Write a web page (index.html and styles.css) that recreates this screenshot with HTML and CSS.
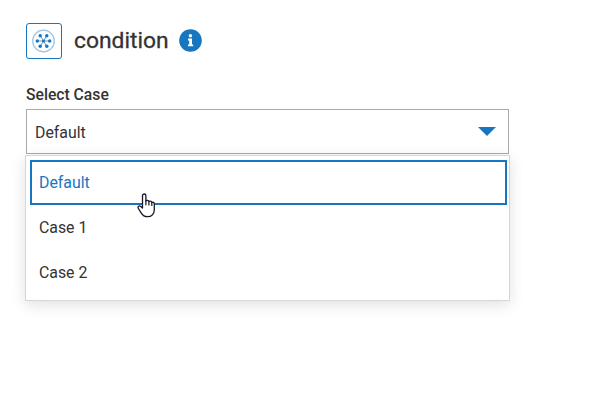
FILE: index.html
```html
<!DOCTYPE html>
<html lang="en">
<head>
    <meta charset="UTF-8">
    <meta name="viewport" content="width=device-width, initial-scale=1.0">
    <title>condition</title>
    <link rel="stylesheet" href="styles.css">
</head>
<body>
    <div class="panel">
        <div class="header">
            <div class="node-icon">
                <svg width="24" height="24" viewBox="0 0 24 24">
                    <circle class="ring" cx="11.5" cy="12" r="10.8"/>
                    <path class="spokes" d="M5 12h13M8.2 6.4l6.6 11.2M14.8 6.4L8.2 17.6"/>
                    <g class="dots">
                        <circle cx="11.5" cy="12" r="1.5"/>
                        <circle cx="5.3" cy="12" r="1.7"/>
                        <circle cx="17.7" cy="12" r="1.7"/>
                        <circle cx="8.2" cy="6.8" r="1.7"/>
                        <circle cx="14.8" cy="6.8" r="1.7"/>
                        <circle cx="8.2" cy="17.2" r="1.7"/>
                        <circle cx="14.8" cy="17.2" r="1.7"/>
                    </g>
                </svg>
            </div>
            <h1>condition</h1>
            <svg class="info" width="23" height="23" viewBox="0 0 23 23">
                <circle cx="11.5" cy="11.5" r="11.3" fill="#1776bf"/>
                <circle cx="11.4" cy="6.7" r="1.7" fill="#fff"/>
                <path d="M9 9.6h4v5.8h1.2v1.9H9v-1.9h1.2v-3.9H9z" fill="#fff"/>
            </svg>
        </div>

        <div class="label">Select Case</div>
        <div class="select">
            <span>Default</span>
            <svg width="18" height="9" viewBox="0 0 18 9">
                <path d="M0 0h18L9 9z" fill="#1776bf"/>
            </svg>
        </div>

        <!-- Open option list -->
        <div class="menu">
            <div class="option active">Default</div>
            <div class="option">Case 1</div>
            <div class="option">Case 2</div>
        </div>
    </div>

    <!-- Hand pointer -->
    <svg class="pointer" width="19" height="25" viewBox="0 0 19 25">
        <path d="M5.5 15V2.7C5.5.4 8.9.4 8.9 2.7V8c.6-1 2.8-.9 3 .6.8-.8 2.7-.5 2.9.9 1-.6 2.5-.1 2.5 1.3v5.7c0 4.3-2.7 7.2-6.8 7.2-3.4 0-5-1.6-6.4-3.9L1.4 15.5c-1.2-2 .9-3.5 2.4-2.1z" fill="#fff" stroke="#161626" stroke-width="1.3" stroke-linejoin="round"/>
        <path d="M8.9 7.5v4.7M11.9 8.5v4M14.8 9.5v3.5" fill="none" stroke="#161626" stroke-width="1.2"/>
    </svg>
</body>
</html>
```

FILE: styles.css
```css
body {
    margin: 0;
    min-height: 100vh;
    background: #fff;
    color: #333;
    font-family: Roboto, sans-serif;
    font-size: 15.85px;
}
.panel {
    width: 485px;
    padding: 23px 0 0 25px;
}
.header {
    display: flex;
    align-items: center;
    height: 36px;
    margin-left: 1px;
}
.node-icon {
    display: flex;
    align-items: center;
    justify-content: center;
    box-sizing: border-box;
    width: 36px;
    height: 36px;
    border: 1px solid #1776bf;
    border-radius: 3px;
}
.ring {
    fill: none;
    stroke: #9cc4e4;
    stroke-width: 1.3;
}
.spokes {
    stroke: #5b9fd3;
    stroke-width: 1;
}
.dots {
    fill: #1776bf;
}
h1 {
    margin: 0 10px 0 12px;
    font-size: 22.8px;
    font-weight: 400;
    line-height: 36px;
    -webkit-text-stroke: 0.3px #333;
}
.info {
    margin-bottom: 2px;
}
.label {
    margin: 26px 0 0 1px;
    font-size: 15.7px;
    font-weight: 500;
    line-height: 20px;
}
.select {
    display: flex;
    align-items: center;
    justify-content: space-between;
    box-sizing: border-box;
    height: 45px;
    margin: 4px 1px 0;
    padding: 0 12px 0 8px;
    border: 1px solid #aaa;
}
.select span {
    padding-top: 1px;
}
.menu {
    box-sizing: border-box;
    height: 146px;
    margin-top: 1px;
    padding: 4px 2px 0 4px;
    border: 1px solid #d6d6d6;
    box-shadow: 0 4px 14px rgba(0, 0, 0, 0.12);
}
.option {
    box-sizing: border-box;
    height: 45px;
    padding-left: 7px;
    border: 2px solid transparent;
    line-height: 41px;
}
.option.active {
    border-color: #1776bf;
    color: #1776bf;
}
.pointer {
    position: absolute;
    left: 137px;
    top: 193px;
}
```
